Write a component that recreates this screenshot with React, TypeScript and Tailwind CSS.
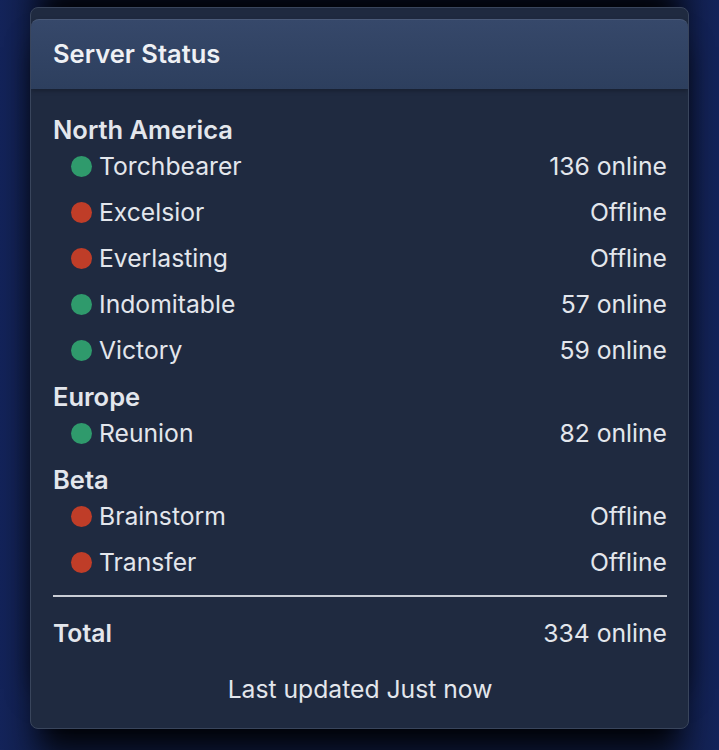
type Server = { name: string; online: number | null }
type Region = { name: string; servers: Server[] }

const regions: Region[] = [
  {
    name: 'North America',
    servers: [
      { name: 'Torchbearer', online: 136 },
      { name: 'Excelsior', online: null },
      { name: 'Everlasting', online: null },
      { name: 'Indomitable', online: 57 },
      { name: 'Victory', online: 59 },
    ],
  },
  { name: 'Europe', servers: [{ name: 'Reunion', online: 82 }] },
  {
    name: 'Beta',
    servers: [
      { name: 'Brainstorm', online: null },
      { name: 'Transfer', online: null },
    ],
  },
]

function ServerRow({ server }: { server: Server }) {
  const up = server.online !== null
  return (
    <div className="flex h-[46px] items-center justify-between pl-[18px]">
      <div className="flex items-center gap-[7px]">
        <span
          className={
            up
              ? 'h-[21px] w-[21px] rounded-full bg-[#2f9a6c]'
              : 'h-[21px] w-[21px] rounded-full bg-[#bf3d28]'
          }
        />
        <span>{server.name}</span>
      </div>
      <span>{up ? `${server.online} online` : 'Offline'}</span>
    </div>
  )
}

export default function App() {
  const total = regions
    .flatMap((r) => r.servers)
    .reduce((sum, s) => sum + (s.online ?? 0), 0)

  return (
    <div className="min-h-[750px] w-full bg-[linear-gradient(90deg,#14245a_0%,#0f1c44_8%,#0f1c44_92%,#14245a_100%)] px-[30px] pt-[7px] font-['Inter','Liberation_Sans',sans-serif] text-[24.7px] text-[#e3e6ec]">
      <div className="overflow-hidden rounded-[8px] border border-[#39455c] bg-[#1f2a40] pt-[11px] shadow-[0_-30px_30px_-10px_rgba(0,0,0,0.9),0_30px_30px_-10px_rgba(0,0,0,0.9)]">
        <div className="flex h-[70px] items-center rounded-t-[8px] border-t border-[#4a5a78] bg-[linear-gradient(180deg,#36486a_0%,#2d3f5e_100%)] px-[22px] text-[25.5px] font-semibold text-[#eef0f4] shadow-[0_2px_4px_rgba(0,0,0,0.25)]">
          Server Status
        </div>
        <div className="pb-[24px] pl-[22px] pr-[21px] pt-[18px]">
          {regions.map((region) => (
            <div key={region.name} className="mt-[9px]">
              <div className="flex h-[28px] items-center text-[25.5px] font-semibold">{region.name}</div>
              {region.servers.map((s) => (
                <ServerRow key={s.name} server={s} />
              ))}
            </div>
          ))}
          <div className="mt-[9px] h-[2px] bg-[#c9cdd5]" />
          <div className="mt-[14px] flex h-[46px] items-center justify-between">
            <span className="font-semibold">Total</span>
            <span>{total} online</span>
          </div>
          <div className="mt-[19px] flex h-[28px] items-center justify-center">Last updated Just now</div>
        </div>
      </div>
    </div>
  )
}
